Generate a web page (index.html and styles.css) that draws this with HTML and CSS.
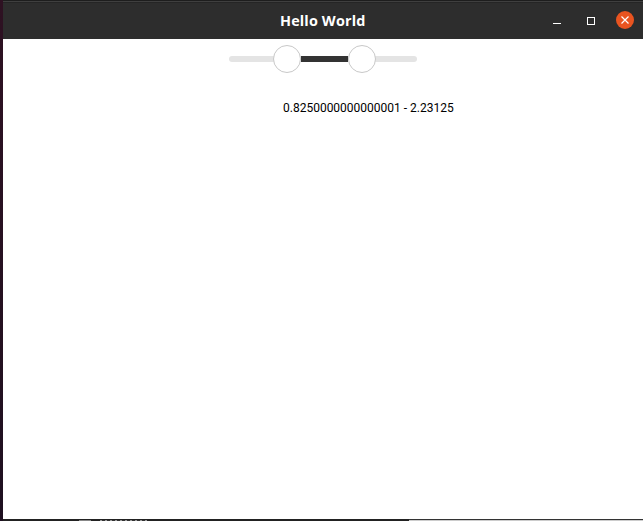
FILE: index.html
```html
<!DOCTYPE html>
<html lang="en">
<head>
<meta charset="utf-8">
<title>Hello World</title>
<link rel="stylesheet" href="styles.css">
</head>
<body>
<div class="window">
  <header class="titlebar">
    <h1 class="title">Hello World</h1>
    <div class="controls">
      <button class="ctl" aria-label="Minimize"><svg width="16" height="16" viewBox="0 0 16 16"><path d="M3 10.5h8" stroke="#fff" stroke-width="1"/></svg></button>
      <button class="ctl" aria-label="Maximize"><svg width="16" height="16" viewBox="0 0 16 16"><rect x="4.5" y="4.5" width="7" height="7" fill="none" stroke="#fff" stroke-width="1"/></svg></button>
      <button class="ctl close" aria-label="Close"><svg width="18" height="18" viewBox="0 0 18 18"><circle cx="9" cy="9" r="9" fill="#e95420"/><path d="M5.5 5.5l7 7M12.5 5.5l-7 7" stroke="#fff" stroke-width="1.2"/></svg></button>
    </div>
  </header>
  <main class="content">
    <div class="slider">
      <div class="thumb"></div>
      <div class="fill"></div>
      <div class="thumb"></div>
    </div>
    <p class="value">0.8250000000000001 - 2.23125</p>
  </main>
</div>
<div class="strip">
  <div class="strip-dark"><span class="strip-block"></span><span class="strip-bits"></span></div>
  <div class="strip-light"></div>
</div>
</body>
</html>
```

FILE: styles.css
```css
html, body {
  margin: 0;
  height: 100%;
}
body {
  width: 643px;
  height: 521px;
  overflow: hidden;
  background: linear-gradient(#2e1122, #1e1020);
  display: flex;
  flex-direction: column;
}
.window {
  flex: 1;
  margin-left: 3px;
  display: flex;
  flex-direction: column;
  background: #fff;
  min-height: 0;
}
.titlebar {
  height: 39px;
  box-sizing: border-box;
  border-top: 1px solid #1d1d1d;
  background: #2d2d2d;
  box-shadow: inset 0 1px 0 #3f3f3f, inset 0 2px 0 #252525;
  display: flex;
  align-items: center;
  position: relative;
}
.title {
  margin: 0 0 0 277px;
  font: 700 14.4px "Open Sans", sans-serif;
  color: #fff;
  letter-spacing: 0.15px;
}
.controls {
  position: absolute;
  right: 9px;
  top: 10px;
  display: flex;
  gap: 17px;
  align-items: center;
}
.ctl {
  padding: 0;
  border: 0;
  background: none;
  display: block;
  height: 18px;
}
.ctl svg {
  display: block;
}
.ctl:first-child svg, .ctl:nth-child(2) svg {
  margin-top: 1px;
}
.content {
  flex: 1;
  display: flex;
  flex-direction: column;
}
.slider {
  width: 188px;
  height: 6px;
  margin: 17px 0 0 226px;
  border-radius: 3px;
  background: #e4e4e4;
  display: flex;
  align-items: center;
  padding-left: 44px;
  box-sizing: border-box;
}
.thumb {
  flex: none;
  width: 28px;
  height: 28px;
  box-sizing: border-box;
  border: 1.5px solid #c8c8c8;
  border-radius: 50%;
  background: #fff;
}
.fill {
  flex: none;
  width: 47px;
  height: 6px;
  background: #333;
}
.value {
  margin: 39px 0 0 280px;
  font: 400 12px/15px Roboto, sans-serif;
  color: #000;
}
.strip {
  flex: none;
  height: 2px;
  margin-left: 3px;
  display: flex;
}
.strip-dark {
  width: 406px;
  background: #222;
  display: flex;
  align-items: flex-end;
  padding-left: 76px;
  box-sizing: border-box;
}
.strip-block {
  width: 12px;
  height: 1px;
  background: #888;
}
.strip-bits {
  width: 47px;
  height: 1px;
  margin-left: 9px;
  background: repeating-linear-gradient(90deg, #999 0 2px, #333 2px 5px);
}
.strip-light {
  flex: 1;
  border-top: 1px solid #333;
  background: #ccc;
}
```
